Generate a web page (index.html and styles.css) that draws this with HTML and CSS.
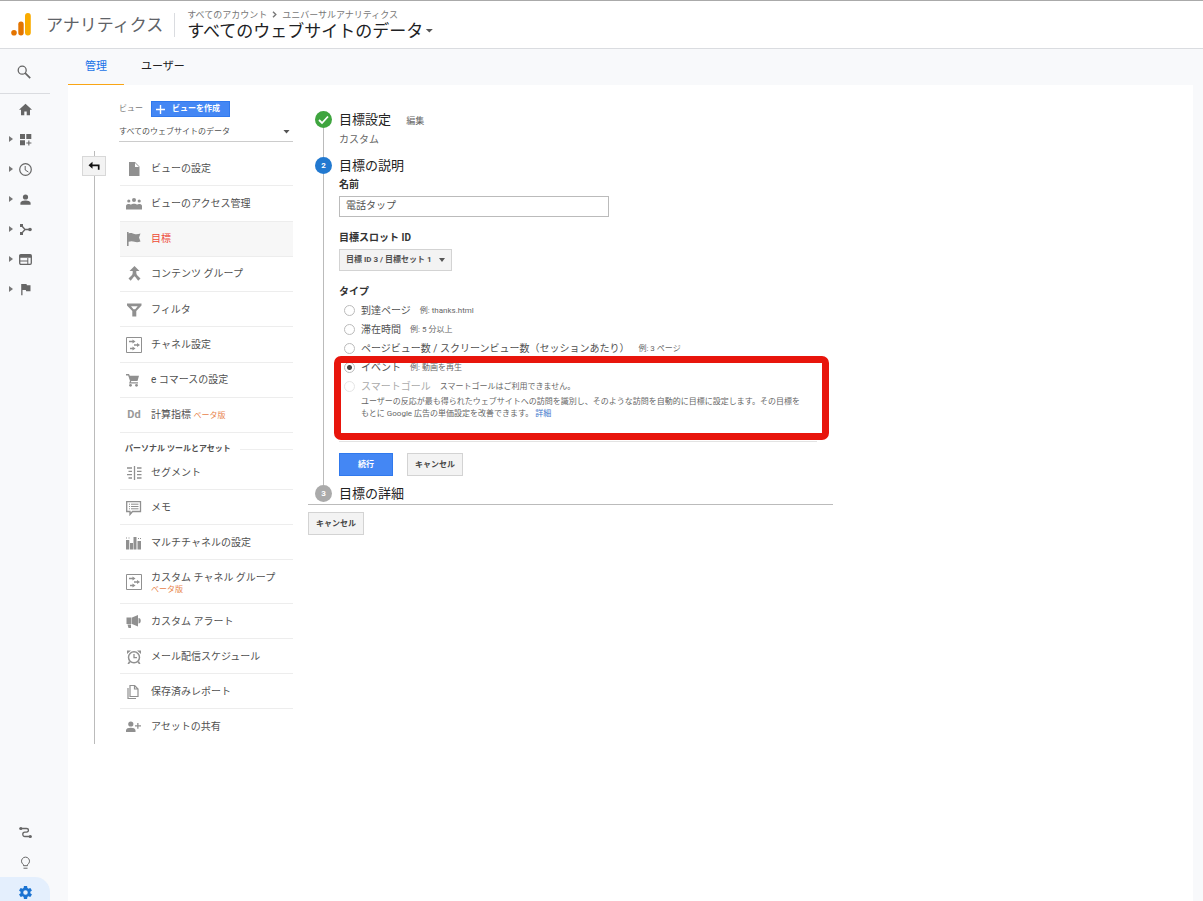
FILE: index.html
```html
<!DOCTYPE html>
<html lang="ja">
<head>
<meta charset="utf-8">
<title>アナリティクス</title>
<link rel="stylesheet" href="styles.css">
</head>
<body>
<svg class="defs" aria-hidden="true">
  <symbol id="channel" viewBox="0 0 16 16"><path d="M.5.5h15v15H.5z" fill="none" stroke="currentColor"/><path d="M3 4.500h4M8 8h4M4 11.500h3" stroke="currentColor" stroke-width="1.300"/><path d="M6.500 2.500 9.500 4.500 6.500 6.500zM11 6l3 2-3 2zM6.500 9.500l3 2-3 2z"/></symbol>
</svg>
<header class="topbar">
  <svg class="logo" viewBox="0 0 20 23"><circle cx="3" cy="19.700" r="2.800" fill="#e37400"/><rect x="7.300" y="8.500" width="5.400" height="14" rx="2.700" fill="#e37400"/><rect x="14" y="0" width="5.800" height="22.500" rx="2.900" fill="#f9ab00"/></svg>
  <span class="product">アナリティクス</span>
  <div class="account">
    <div class="crumbs"><span>すべてのアカウント</span><svg viewBox="0 0 5 7"><path d="M1 .8 3.800 3.500 1 6.200" fill="none" stroke="currentColor" stroke-width="1.400"/></svg><span>ユニバーサルアナリティクス</span></div>
    <button class="view-switch" type="button">すべてのウェブサイトのデータ<i class="caret"></i></button>
  </div>
</header>
<div class="layout">
  <nav class="sidebar" aria-label="メイン">
    <a class="search" href="#" aria-label="検索"><svg viewBox="0 0 14 14"><circle cx="5.200" cy="5.200" r="4" fill="none" stroke="currentColor" stroke-width="1.300"/><path d="m8.200 8.200 5 5" stroke="currentColor" stroke-width="1.700"/></svg></a>
    <a class="side-item" href="#" aria-label="ホーム"><i class="arrow none"></i><svg viewBox="0 0 13 13"><path d="M6.500.8 0 6.800h2v5.400h3.300V8.500h2.400v3.700H11V6.800h2z"/></svg></a>
    <a class="side-item" href="#" aria-label="カスタム"><i class="arrow"></i><svg viewBox="0 0 13 13"><path d="M1 1h5v5H1zM7.300 1h5v5h-5zM1 7.200h5v5H1zM9.300 7.500h1.100v2h2v1.100h-2v2H9.300v-2h-2V9.500h2z"/></svg></a>
    <a class="side-item" href="#" aria-label="リアルタイム"><i class="arrow"></i><svg viewBox="0 0 13 13"><circle cx="6.500" cy="6.500" r="5.800" fill="none" stroke="currentColor" stroke-width="1.200"/><path d="M6.200 3v4l3.200 2" fill="none" stroke="currentColor"/></svg></a>
    <a class="side-item" href="#" aria-label="ユーザー"><i class="arrow"></i><svg viewBox="0 0 13 13"><circle cx="6.500" cy="4" r="2.600"/><path d="M1.400 11.700V10c0-2 3.300-2.600 5.100-2.600s5.100.6 5.100 2.600v1.700z"/></svg></a>
    <a class="side-item" href="#" aria-label="集客"><i class="arrow"></i><svg viewBox="0 0 13 13"><path d="M2.500 2.500 6 6.500h5M6 6.500l-3.500 4" fill="none" stroke="currentColor" stroke-width="1.300"/><path d="M1 1h3v3H1zM1 9h3v3H1z"/><circle cx="11" cy="6.500" r="1.800"/></svg></a>
    <a class="side-item" href="#" aria-label="行動"><i class="arrow"></i><svg viewBox="0 0 13 13"><rect x=".7" y="1.700" width="11.600" height="9.600" rx="1.200" fill="none" stroke="currentColor" stroke-width="1.300"/><path d="M.7 1.700h11.600v3H.7zM.7 7.600h7.600v1H.7zM8.300 5h1v6h-1z"/></svg></a>
    <a class="side-item" href="#" aria-label="コンバージョン"><i class="arrow"></i><svg viewBox="0 0 13 13"><path d="M2.200 1h5.300l.4 1.200h3.600v6H7.200L6.800 7H3.500v5.200H2.200z"/></svg></a>
    <div class="side-foot">
      <a class="side-item" href="#" aria-label="アトリビューション"><i class="arrow none"></i><svg viewBox="0 0 13 13"><circle cx="1.800" cy="2.500" r="1.600"/><circle cx="11.300" cy="10.500" r="1.600"/><path d="M2 2.500h5.500c2.600 0 2.600 3.600 0 3.600H5.800c-2.700 0-2.700 4.400 0 4.400H11" fill="none" stroke="currentColor" stroke-width="1.300"/></svg></a>
      <a class="side-item" href="#" aria-label="発見"><i class="arrow none"></i><svg viewBox="0 0 13 13"><path d="M4.500 9.700V8.600a4 4 0 1 1 4 0v1.100z" fill="none" stroke="currentColor"/><path d="M4.500 11.700h4v1h-4z"/></svg></a>
      <a class="side-item active" href="#" aria-label="管理"><i class="arrow none"></i><svg viewBox="2 2 20 20"><path d="M19.400 13c0-.3.100-.6.100-1s0-.7-.1-1l2.100-1.600c.2-.2.300-.5.200-.7l-2-3.400c-.1-.2-.4-.3-.6-.2l-2.500 1c-.5-.4-1.100-.7-1.700-1l-.4-2.600c0-.3-.2-.5-.5-.5h-4c-.3 0-.5.200-.5.400l-.4 2.700c-.6.200-1.100.6-1.700 1l-2.500-1c-.2-.1-.5 0-.6.200l-2 3.400c-.1.200-.1.500.1.700L4.500 11a8 8 0 0 0 0 2l-2.100 1.600c-.2.200-.2.500-.1.700l2 3.400c.1.200.4.300.6.200l2.500-1c.5.400 1.100.7 1.700 1l.4 2.600c0 .3.200.5.500.5h4c.3 0 .5-.2.500-.4l.4-2.700c.6-.2 1.100-.6 1.700-1l2.500 1c.2.100.5 0 .6-.2l2-3.400c.1-.2.100-.5-.1-.7zM12 15.500a3.500 3.500 0 1 1 0-7 3.500 3.500 0 0 1 0 7z"/></svg></a>
    </div>
  </nav>
  <main class="main">
    <nav class="tabs" aria-label="管理タブ"><a class="tab current" href="#">管理</a><a class="tab" href="#">ユーザー</a></nav>
    <div class="panel">
      <div class="rail"><i class="rail-top"></i><button class="back" type="button" aria-label="戻る"><svg viewBox="0 0 12 10"><path d="M4.500.8v7L.5 4.300z"/><path d="M3.500 4.300h7.200V8.800" fill="none" stroke="currentColor" stroke-width="1.700"/></svg></button><i class="rail-line"></i></div>
      <aside class="menu">
        <div class="menu-head"><span>ビュー</span><button class="create" type="button"><svg viewBox="0 0 9 9"><path d="M4.500 0v9M0 4.500h9" stroke="#fff" stroke-width="1.400"/></svg>ビューを作成</button></div>
        <div class="view-select"><select aria-label="ビュー"><option>すべてのウェブサイトのデータ</option></select><i class="caret"></i></div>
        <div class="group">
          <a class="item" href="#"><svg viewBox="0 0 16 16"><path d="M3 1h6l4.500 4.500V15H3zM9 2v4h4z" fill-rule="evenodd"/></svg>ビューの設定</a>
          <a class="item" href="#"><svg viewBox="0 0 16 16"><circle cx="8" cy="4" r="2"/><circle cx="2.800" cy="5" r="1.600"/><circle cx="13.200" cy="5" r="1.600"/><path d="M0 13.500V10c0-2.200 4-2.500 5-1.300 1-1.400 5-1.400 6 0 1-1.200 5-.9 5 1.300v3.500z"/></svg>ビューのアクセス管理</a>
          <a class="item selected" href="#"><svg viewBox="0 0 16 16"><path d="M1 1h1.600v1.500C5 1.300 7 2.500 8.500 3s4 .2 6-.5L13 6.500l1.500 4c-2.500 1-4.500.8-6 .3s-3.500-1-5.900 0V15H1z"/></svg>目標</a>
          <a class="item" href="#"><svg viewBox="0 0 16 16"><path d="m8.500 0 5 5H10.300v2c0 2 2.200 3.200 4.200 5.500l-2.300 2.200C11 13 9.500 11.300 8.500 10.300c-1 1-2.500 2.700-3.800 4.400L2.500 12.500C4.500 10.200 6.700 9 6.700 7V5H3.500z"/></svg>コンテンツ グループ</a>
          <a class="item" href="#"><svg viewBox="0 0 16 16"><path d="M1 1.500h14.500v2L10.300 9v5.500H6.300V9L1 3.500zM5 4.300l2.500 3h1.700l2.500-3z" fill-rule="evenodd"/></svg>フィルタ</a>
          <a class="item" href="#"><svg viewBox="0 0 16 16"><use href="#channel"/></svg>チャネル設定</a>
          <a class="item" href="#"><svg viewBox="0 0 16 16"><path d="M0 2h3l.8 1.800H13L11.500 9H5.300l-.5 1.200H12v1.300H3L4 9 2.200 3.500H0z"/><circle cx="4.500" cy="13.300" r="1.400"/><circle cx="10.500" cy="13.300" r="1.400"/></svg>e コマースの設定</a>
          <a class="item" href="#"><b class="dd">Dd</b><span>計算指標 <small>ベータ版</small></span></a>
        </div>
        <h2 class="menu-title">パーソナル ツールとアセット</h2>
        <div class="assets">
          <a class="item" href="#"><svg viewBox="0 0 16 16"><path d="M1 3h5M2.500 6.300H6M1 9.600h5M2.500 13H6M11 3h4.500M11 6.300h4.500M11 9.600h4.500M11 13h4.500M8.500 1v14" stroke="currentColor" stroke-width="1.300"/></svg>セグメント</a>
          <a class="item" href="#"><svg viewBox="0 0 16 16"><path d="M.7 1.700h13.800v9.800H6.500L4 14.500v-3H.7z" fill="none" stroke="currentColor" stroke-width="1.300"/><path d="M3 4.200h1M5 4.200h7.500M3 6.500h1M5 6.500h7.500M3 8.800h1M5 8.800h7.500" stroke="currentColor"/></svg>メモ</a>
          <a class="item" href="#"><svg viewBox="0 0 16 16"><path d="M0 5h3.300v9.500H0zM4 8h3v6.500H4zM7.500 2h3v12.500h-3zM11.500 6H15v8.500h-3.500zM0 2.500h1v1H0zM2.500 2.500h1v1h-1zM12 3h1v1h-1zM14 3h1v1h-1z"/></svg>マルチチャネルの設定</a>
          <a class="item tall" href="#"><svg viewBox="0 0 16 16"><use href="#channel"/></svg><span>カスタム チャネル グループ<small>ベータ版</small></span></a>
          <a class="item" href="#"><svg viewBox="0 0 16 16"><path d="M.5 3.500h5v6.500h-5zM6 3.500 12 1v11.500L6 10zM1.500 10.500h3.500V14H2.500zM12.500 4c3 0 3 5.500 0 5.500z"/></svg>カスタム アラート</a>
          <a class="item" href="#"><svg viewBox="0 0 16 16"><circle cx="8" cy="8.300" r="5.500" fill="none" stroke="currentColor" stroke-width="1.500"/><path d="M8 5v3.700h3" fill="none" stroke="currentColor" stroke-width="1.300"/><path d="M1 5V1.500h4zM15 5V1.500h-4zM3 12l1.500 1.500L3 15H1.500zM13 12l-1.500 1.500L13 15h1.500z"/></svg>メール配信スケジュール</a>
          <a class="item" href="#"><svg viewBox="0 0 16 16"><path d="M4 1.500h4.700L12 5v7.500H4zM8.500 1.500V5H12" fill="none" stroke="currentColor" stroke-width="1.200"/><path d="M2 4v10.500h8" fill="none" stroke="currentColor" stroke-width="1.200"/></svg>保存済みレポート</a>
          <a class="item" href="#"><svg viewBox="0 0 16 16"><circle cx="4.800" cy="5" r="2.600"/><path d="M0 13v-1.700C0 8 9.500 8 9.500 11.300V13zM11.200 4h1.300v2.200H15v1.300h-2.500v2.200h-1.300V7.500H9V6.200h2.200z"/></svg>アセットの共有</a>
        </div>
      </aside>
      <form class="goal">
        <section class="step">
          <div class="track"><span class="dot done"><svg viewBox="0 0 17 17"><path d="m4 9 3 3 6-6.500" fill="none" stroke="#fff" stroke-width="1.800"/></svg></span><i></i></div>
          <div class="step-body"><h1 class="step-title">目標設定 <a class="edit" href="#">編集</a></h1><p class="kind">カスタム</p></div>
        </section>
        <section class="step">
          <div class="track"><span class="dot now">2</span><i></i></div>
          <div class="step-body">
            <h1 class="step-title">目標の説明</h1>
            <label class="label" for="name">名前</label>
            <input class="name" id="name" type="text" value="電話タップ">
            <label class="label slot-label" for="slot">目標スロット ID</label>
            <div class="slot"><select id="slot"><option>目標 ID 3 / 目標セット 1</option></select><i class="caret small"></i></div>
            <fieldset class="types">
              <legend class="label">タイプ</legend>
              <label class="choice"><input type="radio" name="type">到達ページ<small>例: thanks.html</small></label>
              <label class="choice"><input type="radio" name="type">滞在時間<small>例: 5 分以上</small></label>
              <label class="choice"><input type="radio" name="type">ページビュー数 / スクリーンビュー数（セッションあたり）<small>例: 3 ページ</small></label>
              <div class="marked">
                <label class="choice"><input type="radio" name="type" checked>イベント<small>例: 動画を再生</small></label>
                <label class="choice off"><input type="radio" name="type" disabled>スマートゴール<small>スマートゴールはご利用できません。</small></label>
                <p class="note">ユーザーの反応が最も得られたウェブサイトへの訪問を識別し、そのような訪問を自動的に目標に設定します。その目標をもとに Google 広告の単価設定を改善できます。 <a href="#">詳細</a></p>
              </div>
            </fieldset>
            <div class="actions"><button class="btn primary" type="button">続行</button><button class="btn" type="button">キャンセル</button></div>
          </div>
        </section>
        <section class="step last">
          <div class="track"><span class="dot">3</span></div>
          <div class="step-body"><h1 class="step-title">目標の詳細</h1></div>
        </section>
        <button class="btn cancel" type="button">キャンセル</button>
      </form>
    </div>
  </main>
</div>
</body>
</html>
```

FILE: styles.css
```css
* { box-sizing: border-box; }
body {
  margin: 0;
  min-height: 100vh;
  display: flex;
  flex-direction: column;
  background: #f8f9fb;
  color: #505050;
  font: 10px/14px Roboto, "Noto Sans CJK JP", sans-serif;
}
a { color: inherit; text-decoration: none; }
button, input, select { font: inherit; color: inherit; margin: 0; }
h1, h2, p { margin: 0; font-weight: 400; }
svg { display: block; flex: none; fill: currentColor; }
.defs { position: absolute; width: 0; height: 0; }
.caret {
  width: 8px;
  height: 4px;
  background: #555;
  clip-path: polygon(0 0, 100% 0, 50% 100%);
}
.caret.small { width: 6px; }

/* Top bar */
.topbar {
  height: 49px;
  display: flex;
  align-items: center;
  padding-left: 11px;
  background: #fff;
  border-top: 1px solid #aaa;
  border-bottom: 1px solid #dadce0;
}
.logo { width: 20px; height: 23px; }
.product { margin-left: 15px; font-size: 17px; line-height: 24px; color: #5f6368; }
.account { margin-left: 11px; padding-left: 13px; position: relative; }
.account::before {
  content: "";
  position: absolute;
  left: 0;
  top: 4px;
  height: 24px;
  border-left: 1px solid #dadce0;
}
.crumbs { display: flex; align-items: center; gap: 5px; font-size: 9px; line-height: 12px; color: #777; }
.crumbs svg { width: 5px; height: 7px; }
.view-switch {
  display: flex;
  align-items: center;
  gap: 2px;
  padding: 0;
  border: 0;
  background: none;
  font-size: 17px;
  line-height: 20px;
  color: #202124;
}

/* Sidebar */
.layout { flex: 1; display: flex; }
.sidebar { width: 68px; flex: none; display: flex; flex-direction: column; color: #666; }
.search {
  width: 50px;
  height: 45px;
  padding: 16px 17px;
  border-bottom: 1px solid #dadce0;
}
.search svg { width: 14px; height: 14px; }
.side-item { width: 50px; height: 30px; display: flex; align-items: center; gap: 6px; padding-left: 9px; }
.side-item svg { width: 13px; height: 13px; }
.arrow { width: 4px; height: 6px; background: #777; clip-path: polygon(0 0, 100% 50%, 0 100%); }
.arrow.none { visibility: hidden; }
.side-foot { margin-top: auto; }
.side-item.active {
  height: 24px;
  padding-top: 6px;
  border-top-right-radius: 15px;
  background: #e4effd;
  color: #1a73d2;
}

/* Main */
.main { flex: 1; display: flex; flex-direction: column; padding-right: 10px; }
.tabs { display: flex; height: 36px; font-size: 11px; line-height: 36px; color: #222; }
.tab { padding: 0 17px; }
.tab.current { color: #1a73e8; border-bottom: 1px solid #f9a514; }
.panel { flex: 1; display: flex; align-items: flex-start; padding: 15px 14px; background: #fff; }

.rail { display: flex; flex-direction: column; align-items: center; margin-top: 51px; }
.rail-top { width: 1px; height: 5px; background: #bbb; }
.rail-line { width: 1px; height: 568px; background: #bbb; }
.back {
  width: 24px;
  height: 20px;
  display: grid;
  place-items: center;
  padding: 0;
  border: 1px solid #d8d8d8;
  background: #f3f3f3;
  color: #111;
}
.back svg { width: 12px; height: 10px; }

/* Admin menu */
.menu { width: 174px; flex: none; margin: 0 15px 0 13px; }
.menu-head { display: flex; align-items: center; gap: 8px; height: 18px; font-size: 8px; color: #777; }
.create {
  display: flex;
  align-items: center;
  gap: 7px;
  height: 16px;
  padding: 0 9px 0 4px;
  border: 1px solid #3079ed;
  background: #4487f4;
  color: #fff;
  font-weight: 700;
}
.create svg { width: 9px; height: 9px; }
.view-select {
  display: flex;
  align-items: center;
  height: 24px;
  padding: 4px 3px 0 0;
  border-bottom: 1px solid #ccc;
  font-size: 8px;
}
.view-select select { flex: 1; min-width: 0; }
.view-select .caret { width: 7px; }
select { appearance: none; padding: 0; border: 0; background: none; }
.group { display: grid; grid-auto-rows: 1fr; min-height: 282px; margin-top: 9px; }
.item {
  display: flex;
  align-items: center;
  gap: 9px;
  min-height: 35px;
  margin-left: 1px;
  padding: 1px 0 0 6px;
  border-bottom: 1px solid #ededed;
}
.item svg { width: 16px; height: 16px; color: #909090; }
.item small { font-size: 8px; color: #e8834a; }
.item.selected { background: #f7f7f7; color: #ee4a35; }
.item.selected svg { color: #909090; }
.item.tall { min-height: 44px; }
.item.tall small { display: block; line-height: 9px; }
.dd { width: 16px; color: #999; font-size: 11px; text-align: center; }
.menu-title {
  display: flex;
  align-items: center;
  gap: 9px;
  height: 22px;
  padding: 10px 0 0 6px;
  font-size: 8px;
  font-weight: 700;
}
.menu-title::after { content: ""; flex: 1; border-top: 1px solid #eee; }
.assets .item:last-child { border-bottom: 0; }

/* Goal form */
.goal { width: 525px; padding-top: 11px; }
.step { display: flex; gap: 7px; padding-left: 7px; }
.track { width: 17px; flex: none; display: flex; flex-direction: column; align-items: center; }
.track i { flex: 1; width: 1px; background: #bbb; }
.dot {
  width: 17px;
  height: 17px;
  border-radius: 50%;
  background: #aaa;
  color: #fff;
  font-size: 8px;
  font-weight: 700;
  line-height: 17px;
  text-align: center;
}
.dot.done { background: #3fa53f; }
.dot.now { background: #2279d0; }
.step-body { width: 478px; padding-bottom: 9px; }
.step-title { margin-bottom: 2px; font-size: 13px; line-height: 18px; color: #222; }
.edit { margin-left: 12px; font-size: 9px; color: #666; }
.kind { line-height: 16px; color: #666; }
.label { display: block; padding: 0; font-size: 10px; line-height: 16px; font-weight: 700; color: #333; }
.name {
  display: block;
  width: 270px;
  height: 21px;
  margin-top: 3px;
  padding: 0 6px 4px;
  border: 1px solid #bbb;
  background: #fff;
}
.slot-label { margin-top: 13px; }
.slot {
  width: 113px;
  height: 22px;
  display: flex;
  align-items: center;
  margin-top: 3px;
  padding: 0 6px;
  border: 1px solid #d3d3d3;
  background: #f3f3f3;
  font-size: 8px;
  font-weight: 700;
}
.slot select { flex: 1; min-width: 0; }
.types { margin: 0; padding: 0 0 21px; border: 0; border-bottom: 1px solid #e3e3e3; }
.types legend { padding-top: 13px; margin-bottom: 1px; }
.choice { display: flex; align-items: center; height: 19px; padding-left: 5px; white-space: nowrap; }
.choice input {
  appearance: none;
  width: 11px;
  height: 11px;
  margin-right: 6px;
  border: 1px solid #bbb;
  border-radius: 50%;
  background: #fff;
}
.choice input:checked { background: radial-gradient(circle, #444 2px, #fff 3px); }
.choice small { margin-left: 9px; font-size: 8px; color: #666; }
.off { color: #aaa; }
.choice.off input { border-color: #e5e5e5; }
.marked { position: relative; }
.marked::after {
  content: "";
  position: absolute;
  inset: -2px -12px -20px -5px;
  border: 7px solid #e8150c;
  border-radius: 7px;
  pointer-events: none;
}
.note { max-width: 444px; margin-left: 22px; font-size: 8px; line-height: 12px; color: #666; }
.note a { color: #4478cc; }
.actions { display: flex; gap: 14px; margin-top: 11px; }
.btn {
  height: 23px;
  padding: 0 7px;
  border: 1px solid #d3d3d3;
  background: #f3f3f3;
  font-size: 8px;
  line-height: 12px;
  font-weight: 700;
  color: #444;
}
.btn.primary { width: 54px; border-color: #3079ed; background: #4487f4; color: #fff; }
.step.last { border-bottom: 1px solid #bbb; }
.step.last .step-body { padding: 0; }
.step.last .step-title { margin-bottom: 1px; }
.cancel { margin-top: 7px; }
```
